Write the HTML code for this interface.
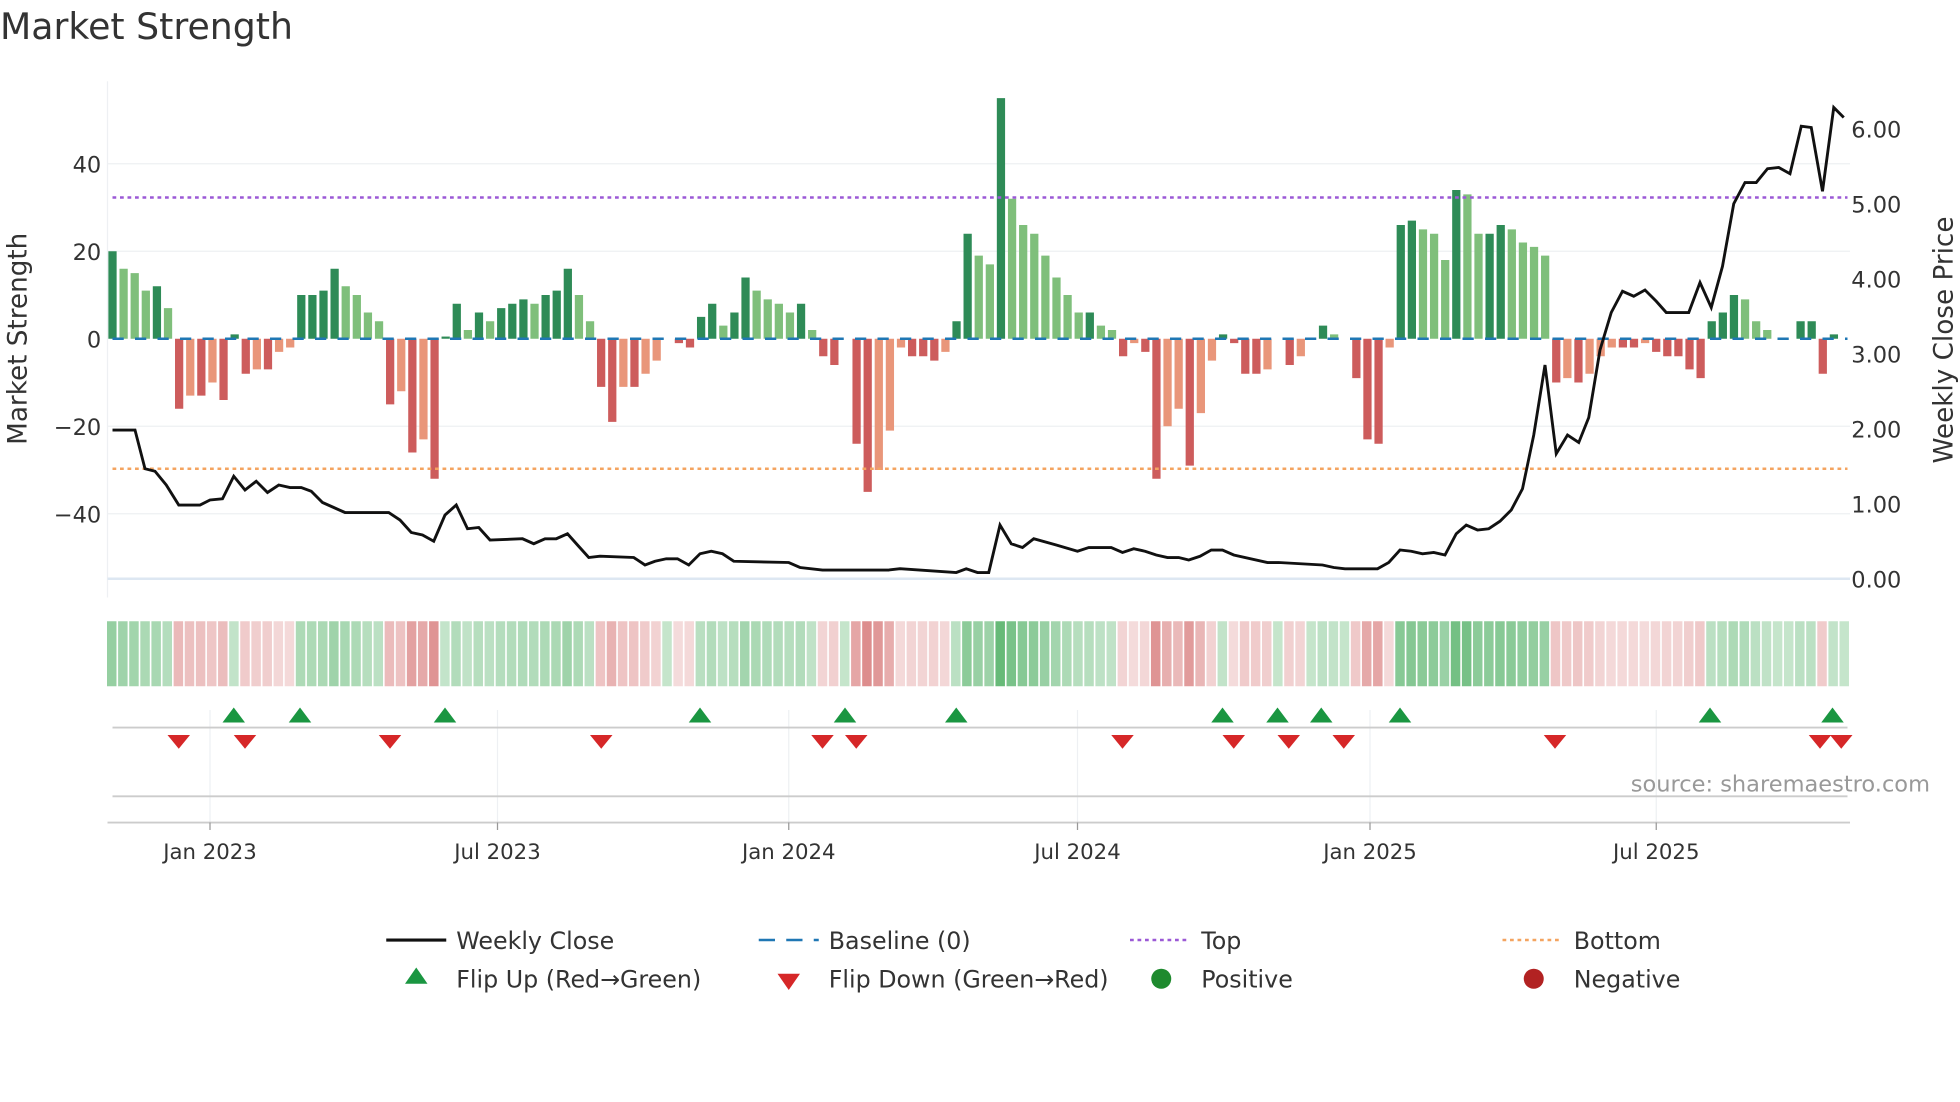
<!DOCTYPE html>
<html><head><meta charset="utf-8"><style>
html,body{margin:0;padding:0;background:#fff;width:1960px;height:1102px;overflow:hidden}
svg{display:block}
text{font-family:"DejaVu Sans","Liberation Sans",sans-serif;fill:#333}
</style></head><body>
<svg id="s" width="1960" height="1102" viewBox="0 0 1568 881.6" xmlns="http://www.w3.org/2000/svg">
<text x="0" y="31" font-size="29">Market Strength</text>
<g stroke="#eef0f3" stroke-width="1">
<line x1="86" x2="1480" y1="131" y2="131"/><line x1="86" x2="1480" y1="201" y2="201"/>
<line x1="86" x2="1480" y1="341" y2="341"/><line x1="86" x2="1480" y1="411" y2="411"/>
</g>
<line x1="86" x2="86" y1="65" y2="478" stroke="#eef0f3"/>
<line x1="86" x2="1480" y1="463" y2="463" stroke="#dde7f2" stroke-width="2"/>
<g id="bars"></g>
<line x1="90" x2="1478" y1="271" y2="271" stroke="#1f77b4" stroke-width="2" stroke-dasharray="9,9"/>
<line x1="90" x2="1478" y1="158" y2="158" stroke="#9b59d6" stroke-width="2" stroke-dasharray="3,3"/>
<line x1="90" x2="1478" y1="375" y2="375" stroke="#f4a460" stroke-width="2" stroke-dasharray="3,3"/>
<polyline id="price" fill="none" stroke="#111" stroke-width="2.3"/>
<g font-size="18" text-anchor="end">
<text x="81" y="138">40</text><text x="81" y="208">20</text><text x="81" y="278">0</text>
<text x="81" y="348">−20</text><text x="81" y="418">−40</text></g>
<g font-size="18">
<text x="1481" y="110">6.00</text><text x="1481" y="170">5.00</text><text x="1481" y="230">4.00</text>
<text x="1481" y="290">3.00</text><text x="1481" y="350">2.00</text><text x="1481" y="410">1.00</text><text x="1481" y="470">0.00</text></g>
<text transform="translate(21,271) rotate(-90)" font-size="21" text-anchor="middle">Market Strength</text>
<text transform="translate(1562,272) rotate(-90)" font-size="21" text-anchor="middle">Weekly Close Price</text>
<g id="heat"></g>
<g stroke="#eef0f3"><line x1="168" x2="168" y1="568" y2="658"/><line x1="398" x2="398" y1="568" y2="658"/><line x1="631" x2="631" y1="568" y2="658"/><line x1="862" x2="862" y1="568" y2="658"/><line x1="1096" x2="1096" y1="568" y2="658"/><line x1="1325" x2="1325" y1="568" y2="658"/></g>
<line x1="90" x2="1478" y1="582" y2="582" stroke="#ccc" stroke-width="1.5"/>
<line x1="90" x2="1478" y1="637" y2="637" stroke="#ccc" stroke-width="1.5"/>
<line x1="86" x2="1480" y1="658" y2="658" stroke="#ccc" stroke-width="1.5"/>
<g id="flips"></g>
<text x="1544" y="633" font-size="18" text-anchor="end" style="fill:#999">source: sharemaestro.com</text>
<g stroke="#999"><line x1="168" x2="168" y1="658" y2="664"/><line x1="398" x2="398" y1="658" y2="664"/><line x1="631" x2="631" y1="658" y2="664"/><line x1="862" x2="862" y1="658" y2="664"/><line x1="1096" x2="1096" y1="658" y2="664"/><line x1="1325" x2="1325" y1="658" y2="664"/></g>
<g font-size="17" text-anchor="middle">
<text x="168" y="687">Jan 2023</text><text x="398" y="687">Jul 2023</text><text x="631" y="687">Jan 2024</text>
<text x="862" y="687">Jul 2024</text><text x="1096" y="687">Jan 2025</text><text x="1325" y="687">Jul 2025</text></g>
<g font-size="19">
<line x1="309" x2="357" y1="752" y2="752" stroke="#111" stroke-width="2.5"/><text x="365" y="759">Weekly Close</text>
<line x1="607" x2="655" y1="752" y2="752" stroke="#1f77b4" stroke-width="2" stroke-dasharray="13,9"/><text x="663" y="759">Baseline (0)</text>
<line x1="904" x2="952" y1="752" y2="752" stroke="#9b59d6" stroke-width="2" stroke-dasharray="3,3"/><text x="961" y="759">Top</text>
<line x1="1202" x2="1250" y1="752" y2="752" stroke="#f4a460" stroke-width="2" stroke-dasharray="3,3"/><text x="1259" y="759">Bottom</text>
<polygon points="333,774 342,787 324,787" fill="#1a9641"/><text x="365" y="790">Flip Up (Red→Green)</text>
<polygon points="622,779 640,779 631,792" fill="#d62728"/><text x="663" y="790">Flip Down (Green→Red)</text>
<circle cx="929" cy="783" r="8" fill="#1e8a2e"/><text x="961" y="790">Positive</text>
<circle cx="1227" cy="783" r="8" fill="#b22222"/><text x="1259" y="790">Negative</text>
</g>
</svg>
<script>
var v=[20,16,15,11,12,7,-16,-13,-13,-10,-14,1,-8,-7,-7,-3,-2,10,10,11,16,12,10,6,4,-15,-12,-26,-23,-32,0.5,8,2,6,4,7,8,9,8,10,11,16,10,4,-11,-19,-11,-11,-8,-5,0,-1,-2,5,8,3,6,14,11,9,8,6,8,2,-4,-6,0,-24,-35,-30,-21,-2,-4,-4,-5,-3,4,24,19,17,55,32,26,24,19,14,10,6,6,3,2,-4,-1,-3,-32,-20,-16,-29,-17,-5,1,-1,-8,-8,-7,0,-6,-4,0,3,1,0,-9,-23,-24,-2,26,27,25,24,18,34,33,24,24,26,25,22,21,19,-10,-9,-10,-8,-4,-2,-2,-2,-1,-3,-4,-4,-7,-9,4,6,10,9,4,2,0,0,4,4,-8,1,0];
var ns="http://www.w3.org/2000/svg",b=document.getElementById('bars'),h=document.getElementById('heat');
function el(t,a,p){var e=document.createElementNS(ns,t);for(var k in a)e.setAttribute(k,a[k]);p.appendChild(e);return e}
var dx=(1476-90)/(v.length-1);
for(var i=0;i<v.length;i++){var x=90+i*dx,val=v[i],pv=i?v[i-1]:0,c;
 if(val>=0)c=(val>=pv)?'#2e8b57':'#7fbf7b';else c=(val<=pv)?'#cd5c5c':'#e9967a';
 if(val!=0){var y=271-val*3.5;el('rect',{x:x-3.3,y:Math.min(y,271),width:6.6,height:Math.abs(val*3.5),fill:c},b);}
 var m=Math.min(Math.abs(val)/40,1),col;
 if(val>=0)col='rgba(46,160,70,'+(0.28+0.45*m)+')';else col='rgba(200,70,70,'+(0.18+0.5*m)+')';
 el('rect',{x:x-4.4,y:497,width:dx-1.3,height:52,fill:col},h);}
var p=[90,344,108,344,116,375,124,377,133,388,143,404,160,404,168,400,178,399,187,381,196,392,205,385,214,394,223,388,232,390,241,390,249,393,258,402,267,406,276,410,285,410,311,410,320,416,329,426,338,428,347,433,356,412,365,404,374,423,383,422,392,432,418,431,427,435,436,431,445,431,454,427,462,436,471,446,480,445,507,446,516,452,524,449,533,447,542,447,551,452,560,443,569,441,578,443,587,449,631,450,640,454,658,456,711,456,720,455,765,458,773,455,782,458,791,458,800,420,809,435,818,438,827,431,845,436,862,441,871,438,889,438,898,442,907,439,916,441,925,444,934,446,943,446,951,448,960,445,969,440,978,440,987,444,1014,450,1023,450,1058,452,1067,454,1076,455,1102,455,1111,450,1120,440,1129,441,1138,443,1147,442,1156,444,1165,427,1173,420,1182,424,1191,423,1200,417,1209,408,1218,391,1227,348,1236,292,1245,363,1254,348,1263,354,1271,334,1280,280,1289,250,1298,233,1307,237,1316,232,1325,241,1333,250,1351,250,1360,226,1369,246,1378,213,1387,163,1396,146,1405,146,1414,135,1423,134,1432,139,1441,101,1449,102,1458,153,1467,86,1475,94];
var s='';for(var j=0;j<p.length;j+=2)s+=p[j]+','+p[j+1]+' ';document.getElementById('price').setAttribute('points',s);
var f=document.getElementById('flips');
[187,240,356,560,676,765,978,1022,1057,1120,1368,1466].forEach(function(x){el('polygon',{points:x+',566 '+(x+9)+',578 '+(x-9)+',578',fill:'#1a9641'},f)});
[143,196,312,481,658,685,898,987,1031,1075,1244,1456,1473].forEach(function(x){el('polygon',{points:(x-9)+',588 '+(x+9)+',588 '+x+',599',fill:'#d62728'},f)});
</script>
</body></html>
